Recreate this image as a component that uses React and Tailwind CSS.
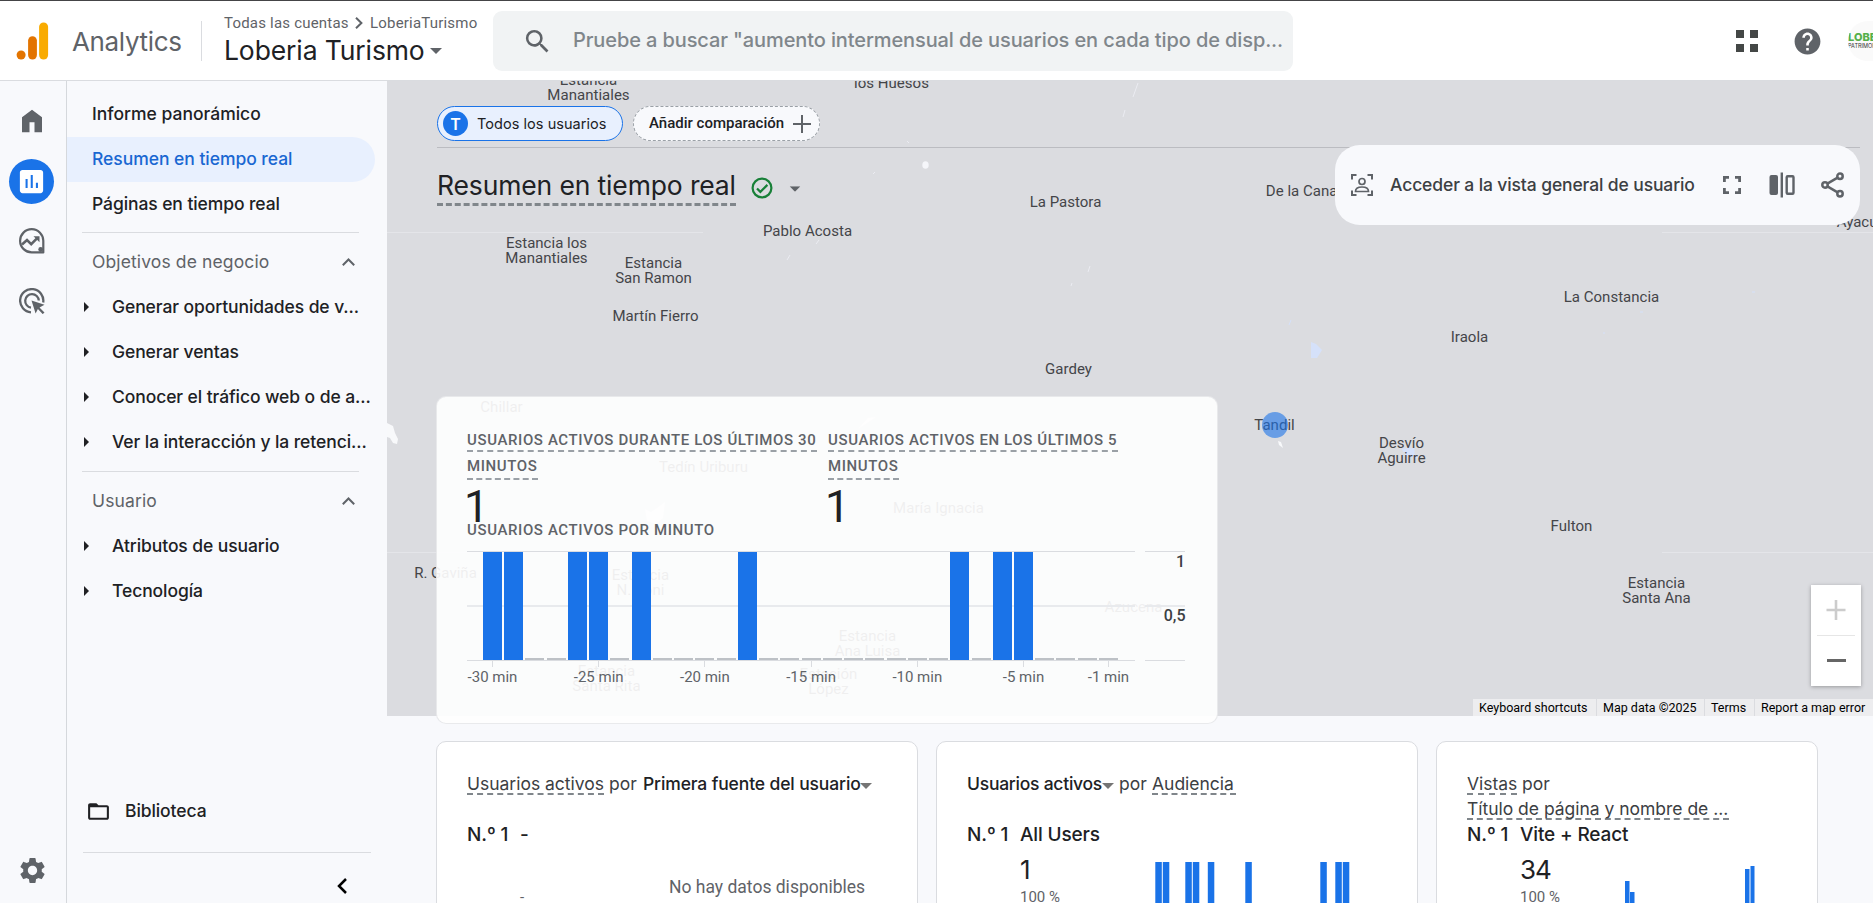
import React from "react";

const SANS = "font-['Inter',sans-serif]";
const ROBOTO = "font-['Roboto',sans-serif]";

function Svg({ className, children, box = "0 0 24 24" }) {
  return (
    <svg viewBox={box} className={"shrink-0 " + className} fill="currentColor">
      {children}
    </svg>
  );
}

function Caret({ className }) {
  return (
    <Svg box="0 0 12 6" className={"h-[6px] w-[12px] " + className}>
      <path d="M0 0h12L6 6z" />
    </Svg>
  );
}

function Header() {
  return (
    <header className="flex h-[81px] shrink-0 items-start border-t border-b border-t-[#444446] border-b-[#dadce0] bg-white">
      <svg viewBox="0 0 32 38" className="mt-[21px] ml-[16px] h-[38px] w-[33px] shrink-0">
        <circle cx="4.6" cy="33" r="4.5" fill="#e37400" />
        <rect x="11.6" y="14.2" width="8.8" height="23.3" rx="4.4" fill="#e37400" />
        <rect x="22.6" y="0.4" width="9" height="37.1" rx="4.5" fill="#f9ab00" />
      </svg>
      <div className="mt-[21px] ml-[23px] w-[130px] text-[26px] leading-[40px] tracking-[-0.35px] text-[#5f6368]">Analytics</div>
      <div className="mt-[20px] h-[40px] w-px shrink-0 bg-[#dadce0]" />
      <div className="ml-[22px] w-[269px] shrink-0">
        <div className={"mt-[11px] flex h-[22px] items-center text-[15px] tracking-[0.2px] whitespace-nowrap text-[#5f6368] " + ROBOTO}>
          <span className="w-[124px]">Todas las cuentas</span>
          <svg viewBox="0 0 8 12" className="mx-[7px] h-[12px] w-[8px]" fill="none" stroke="#5f6368" strokeWidth="2">
            <path d="M1 0.8l5.4 5.2L1 11.2" />
          </svg>
          <span>LoberiaTurismo</span>
        </div>
        <div className="flex h-[34px] items-center text-[26.5px] tracking-[-0.12px] whitespace-nowrap text-[#202124]">
          <span className="w-[200px]">Loberia Turismo</span>
          <Caret className="ml-[6px] text-[#5f6368]" />
        </div>
      </div>
      <div className="mt-[10px] flex h-[60px] w-[800px] shrink-0 items-center rounded-[9px] bg-[#f1f3f4]">
        <Svg className="ml-[29px] h-[31px] w-[31px] text-[#5f6368]">
          <path d="M15.5 14h-.79l-.28-.27A6.471 6.471 0 0 0 16 9.5 6.5 6.5 0 1 0 9.5 16c1.61 0 3.09-.59 4.23-1.57l.27.28v.79l5 4.99L20.49 19l-4.99-5zm-6 0C7.01 14 5 11.99 5 9.5S7.01 5 9.5 5 14 7.01 14 9.5 11.99 14 9.5 14z" />
        </Svg>
        <span className="mb-[3px] ml-[20px] text-[20px] font-medium tracking-[-0.11px] whitespace-nowrap text-[#80868b]">
          Pruebe a buscar "aumento intermensual de usuarios en cada tipo de disp...
        </span>
      </div>
      <div className="ml-[443px] mt-[29px] grid shrink-0 grid-cols-2 gap-[6px]">
        <i className="size-[8px] bg-[#444746]" />
        <i className="size-[8px] bg-[#444746]" />
        <i className="size-[8px] bg-[#444746]" />
        <i className="size-[8px] bg-[#444746]" />
      </div>
      <Svg className="mt-[25px] ml-[34px] size-[31px] text-[#5f6368]">
        <path d="M12 2C6.48 2 2 6.48 2 12s4.48 10 10 10 10-4.48 10-10S17.52 2 12 2zm1 17h-2v-2h2v2zm2.07-7.75l-.9.92C13.45 12.9 13 13.5 13 15h-2v-.5c0-1.1.45-2.1 1.17-2.83l1.24-1.26c.37-.36.59-.86.59-1.41 0-1.1-.9-2-2-2s-2 .9-2 2H8c0-2.21 1.79-4 4-4s4 1.79 4 4c0 .88-.36 1.68-.93 2.25z" />
      </Svg>
      <div className="ml-[25px] mt-[20px] flex h-[40px] w-[25px] shrink-0 flex-col justify-center overflow-hidden rounded-l-[20px] bg-[#fafafa]">
        <span className="text-[11px] leading-[11px] font-extrabold tracking-[0px] text-[#55b04a]">LOBERIA</span>
        <span className="text-[5.5px] leading-[7px] tracking-[0px] text-[#333]">PATRIMONIO</span>
      </div>
    </header>
  );
}

function Rail() {
  return (
    <div className="flex w-[67px] shrink-0 flex-col items-start border-r border-[#d5d8dc] text-[#5f6368]">
      <Svg className="mt-[25px] ml-[17px] size-[30px]">
        <path d="M4 21V9l8-6 8 6v12h-6v-8h-4v8z" />
      </Svg>
      <div className="mt-[23px] ml-[9px] flex size-[45px] items-center justify-center rounded-full bg-[#1a73e8] text-white">
        <Svg className="size-[31px]">
          <path d="M19 3H5c-1.1 0-2 .9-2 2v14c0 1.100.9 2 2 2h14c1.100 0 2-.9 2-2V5c0-1.100-.9-2-2-2zM9 17H7.400v-7H9v7zm4 0h-1.600V7H13v10zm4 0h-1.600v-4H17v4z" />
        </Svg>
      </div>
      <svg viewBox="0 0 26 26" className="mt-[24px] ml-[19px] size-[26px]" fill="none" stroke="currentColor" strokeWidth="2.2">
        <path d="M24.300 13A11.600 11.600 0 1 0 13 24.400h11.300z" strokeLinejoin="round" />
        <path d="M3 16.500l5-4.400 4.200 4 6.300-6.200" strokeWidth="2.600" />
        <path d="M14.500 8.300h6v6z" fill="currentColor" stroke="none" />
        <circle cx="21.700" cy="21.500" r="2.400" fill="currentColor" stroke="none" />
      </svg>
      <svg viewBox="0 0 26 26" className="mt-[34px] ml-[19px] size-[26px]" fill="none" stroke="currentColor" strokeWidth="2.300">
        <path d="M24.200 14.500A11.600 11.600 0 1 0 12 24.300" />
        <path d="M19.800 12.500A6.800 6.800 0 1 0 12 19.600" />
        <path d="M12.500 12.500l13 4.300-5 2.600 5 5-1.800 1.700-4.800-5-2.300 4.500z" fill="currentColor" stroke="none" />
      </svg>
      <Svg className="mt-auto mb-[17px] ml-[17px] size-[31px]">
        <path d="M19.140 12.940c.04-.3.06-.61.06-.94 0-.32-.02-.64-.07-.94l2.030-1.580a.49.49 0 0 0 .12-.61l-1.920-3.320a.488.488 0 0 0-.59-.22l-2.390.96c-.5-.38-1.030-.7-1.620-.94l-.36-2.540a.484.484 0 0 0-.48-.41h-3.840c-.24 0-.43.17-.47.41l-.36 2.540c-.59.24-1.130.57-1.620.94l-2.390-.96c-.22-.08-.47 0-.59.22L2.740 8.870c-.12.21-.08.47.12.61l2.030 1.580c-.05.3-.09.63-.09.94s.02.64.07.94l-2.030 1.580a.49.49 0 0 0-.12.61l1.920 3.320c.12.22.37.29.59.22l2.390-.96c.5.38 1.030.7 1.620.94l.36 2.540c.05.24.24.41.48.41h3.840c.24 0 .44-.17.47-.41l.36-2.540c.59-.24 1.130-.56 1.620-.94l2.390.96c.22.08.47 0 .59-.22l1.920-3.320c.12-.22.07-.47-.12-.61l-2.010-1.580zM12 15.600c-1.980 0-3.600-1.620-3.600-3.600s1.620-3.600 3.600-3.600 3.600 1.620 3.600 3.600-1.620 3.600-3.600 3.600z" />
      </Svg>
    </div>
  );
}

function NavItem({ children }) {
  return (
    <div className="flex h-[45px] items-center pl-[17px]">
      <svg viewBox="0 0 5 10" className="mb-[2px] h-[10px] w-[5px]" fill="#202124">
        <path d="M0 0l5 5-5 5z" />
      </svg>
      <span className="ml-[23px] whitespace-nowrap">{children}</span>
    </div>
  );
}

function NavGroup({ title, children }) {
  return (
    <div className="mt-[5px]">
      <div className="ml-[15px] mr-[28px] h-px bg-[#dadce0]" />
      <div className="mt-[7px] flex h-[45px] items-center justify-between pr-[32px] pl-[25px] font-normal tracking-[0.12px] text-[#5f6368]">
        <span>{title}</span>
        <svg viewBox="0 0 13 8" className="mb-[2px] h-[8px] w-[13px]" fill="none" stroke="#5f6368" strokeWidth="2">
          <path d="M.8 7.200L6.500 1.500l5.700 5.700" />
        </svg>
      </div>
      {children}
    </div>
  );
}

function Nav() {
  return (
    <nav className="flex w-[320px] shrink-0 flex-col pt-[11px] text-[17.5px] font-medium tracking-[-0.09px] text-[#202124]">
      <div className="flex h-[45px] items-center pl-[25px] tracking-normal">Informe panorámico</div>
      <div className="mr-[12px] flex h-[45px] items-center rounded-r-full bg-[#e8f0fe] pl-[25px] tracking-[-0.04px] text-[#1967d2]">Resumen en tiempo real</div>
      <div className="flex h-[45px] items-center pl-[25px]">Páginas en tiempo real</div>
      <NavGroup title="Objetivos de negocio">
        <NavItem>Generar oportunidades de v...</NavItem>
        <NavItem>Generar ventas</NavItem>
        <NavItem>Conocer el tráfico web o de a...</NavItem>
        <NavItem>Ver la interacción y la retenci...</NavItem>
      </NavGroup>
      <div className="h-px" />
      <NavGroup title="Usuario">
        <NavItem>Atributos de usuario</NavItem>
        <NavItem>Tecnología</NavItem>
      </NavGroup>
      <div className="mt-auto flex h-[45px] items-center pl-[19px]">
        <Svg className="size-[25px]">
          <path d="M20 6h-8l-2-2H4c-1.100 0-1.990.9-1.990 2L2 18c0 1.100.9 2 2 2h16c1.100 0 2-.9 2-2V8c0-1.100-.9-2-2-2zm0 12H4V8h16v10z" />
        </Svg>
        <span className="ml-[14px]">Biblioteca</span>
      </div>
      <div className="mt-[18px] mr-[16px] ml-[16px] h-px shrink-0 bg-[#dadce0]" />
      <svg viewBox="0 0 10 16" className="mt-[25px] mb-[9px] ml-[270px] h-[16px] w-[10px] shrink-0" fill="none" stroke="#000" strokeWidth="2.500">
        <path d="M9 1L2 8l7 7" />
      </svg>
    </nav>
  );
}

const places = [
  [588, 87, "Estancia\nManantiales"],
  [891, 82, "los Huesos"],
  [1065, 201, "La Pastora"],
  [807, 230, "Pablo Acosta"],
  [546, 250, "Estancia los\nManantiales"],
  [653, 270, "Estancia\nSan Ramon"],
  [655, 315, "Martín Fierro"],
  [1068, 368, "Gardey"],
  [1303, 190, "De la Canal"],
  [1469, 336, "Iraola"],
  [1611, 296, "La Constancia"],
  [1869, 221, "Ayacucho"],
  [1274, 424, "Tandil"],
  [1401, 450, "Desvío\nAguirre"],
  [1571, 525, "Fulton"],
  [1656, 590, "Estancia\nSanta Ana"],
  [501, 406, "Chillar"],
  [703, 466, "Tedín Uriburu"],
  [938, 507, "María Ignacia"],
  [445, 572, "R. Gaviña"],
  [640, 582, "Estancia\nN. Zoni"],
  [1133, 606, "Azucena"],
  [867, 643, "Estancia\nAna Luisa"],
  [606, 678, "Estancia\nSanta Rita"],
  [828, 681, "Estación\nLópez"],
];

function MapLayer() {
  return (
    <div className={"absolute inset-x-0 top-0 h-[635px] overflow-hidden bg-[#dbdce0] " + ROBOTO}>
      <svg viewBox="387 81 1486 635" className="absolute inset-0 h-full w-full">
        <path d="M387 232.500h316M1662 232.500h211M387 552.500h316M1662 552.500h211" stroke="#e4e5e9" />
        <path d="M387 423l6 3 2 7 3 6-1 5-4-1-3-5-3-1z" fill="#f8f9fb" />
        <path d="M1311 342l5 2 6 6-5 8h-6z" fill="#d5e1fa" />
        <ellipse cx="925.500" cy="165" rx="3.200" ry="3.800" fill="#f5f6fa" />
        <path d="M1138 83l-5 14M1125 110l-2 7M816 244l3-4M787 260l3-5M1072 283l-1 3M1088 272l2-6M873 174l2-2M907 141l2 2" stroke="#ebecf2" />
        <path d="M1402 449l12-1v6l4 4-12-3zM1289 325l2-5M1752 292h3M1603 333h2M1640 312h3" fill="#d5e1fa" stroke="#d5e1fa" />
        <path d="M1278 441l3 1 2 6-4-3z" fill="#f8f9fb" />
        <path d="M645 509l6 3 6-4 8-6-2 16-7 6-9-3zM858 429l10-11 8-1" fill="#f8f9fb" />
      </svg>
      {places.map(([x, y, name]) => (
        <div
          key={x + name}
          className="absolute -translate-x-1/2 -translate-y-1/2 text-center text-[15px] leading-[15px] tracking-[0.02px] whitespace-pre text-[#444549]"
          style={{ left: x - 386.5, top: y - 80 }}
        >
          {name}
        </div>
      ))}
      <div className="absolute top-[331px] left-[875px] size-[26px] rounded-full bg-[#1a73e8]/60" />
      <div className="absolute top-[504px] left-[1424px] flex h-[101px] w-[50px] flex-col items-center bg-white shadow-[0_1px_4px_rgba(0,0,0,0.3)]">
        <svg viewBox="0 0 20 20" className="mt-[15px] size-[20px] text-[#ccc]" stroke="currentColor" strokeWidth="2.600">
          <path d="M.5 10h19M10 0v20" />
        </svg>
        <div className="mt-[15px] h-px w-[38px] bg-[#e6e6e6]" />
        <div className="mt-[23px] h-[3px] w-[19px] bg-[#666]" />
      </div>
      <div className="absolute right-0 bottom-0 flex h-[17px] gap-px text-[12.5px] leading-[17px] whitespace-nowrap text-black">
        <span className="w-[123px] bg-[#ededef] pl-[6px]">Keyboard shortcuts</span>
        <span className="w-[107px] bg-[#ededef] pl-[6px]">Map data ©2025</span>
        <span className="w-[49px] bg-[#ededef] pl-[6px]">Terms</span>
        <span className="w-[118px] bg-[#ededef] pl-[6px]">Report a map error</span>
      </div>
    </div>
  );
}

const minuteUsers = [1, 1, 0, 0, 1, 1, 0, 1, 0, 0, 0, 0, 1, 0, 0, 0, 0, 0, 0, 0, 0, 0, 1, 0, 1, 1, 0, 0, 0, 0];
const ticks = [
  [0, "-30 min"],
  [5, "-25 min"],
  [10, "-20 min"],
  [15, "-15 min"],
  [20, "-10 min"],
  [25, "-5 min"],
  [29, "-1 min"],
];

function MinuteChart() {
  return (
    <svg viewBox="0 0 720 140" className={"mt-[10px] h-[140px] w-[720px] font-normal tracking-normal " + ROBOTO} shapeRendering="crispEdges">
      <path d="M0 1.500h668M678 1.500h40M0 110.500h668M678 110.500h40" stroke="#dadce0" />
      <path d="M0 56h668M678 56h40" stroke="#e8eaed" strokeWidth="2" />
      {minuteUsers.map((n, i) => (
        <rect
          key={i}
          x={16 + Math.round(21.240 * i)}
          y={n ? 2 : 108}
          width="19"
          height={n ? 108 : 2}
          fill={n ? "#1a73e8" : "#bdc1c6"}
        />
      ))}
      {ticks.map(([i, label]) => (
        <g key={label}>
          <rect x={25 + Math.round(21.240 * i)} y="111" width="1" height="6" fill="#dadce0" />
          <text x={25.500 + 21.240 * i} y="132" textAnchor="middle" fontSize="15" fill="#5f6368">
            {label}
          </text>
        </g>
      ))}
      <g textAnchor="end" fontSize="16" fontWeight="500" fill="#3c4043">
        <text x="718" y="17">1</text>
        <text x="718.500" y="71">0,5</text>
      </g>
    </svg>
  );
}

function Metric({ first, second, value, width }) {
  return (
    <div>
      <div className="h-[26px] leading-[26px] whitespace-nowrap">
        <span className={"inline-block h-[25px] border-b-2 border-dashed border-[#9aa0a6] " + width}>{first}</span>
      </div>
      <div className="h-[27px] leading-[26px]">
        <span className="inline-block h-[27px] w-[71px] border-b-2 border-dashed border-[#9aa0a6]">{second}</span>
      </div>
      <div className="-ml-[3px] mt-[2px] h-[38px] text-[44px] leading-[50px] font-normal tracking-normal text-[#202124]">{value}</div>
    </div>
  );
}

function RealtimeCard() {
  return (
    <section className={"mt-[190px] h-[328px] w-[782px] rounded-[10px] border border-[#dadce0]/60 bg-[#fefefe]/92 pl-[30px] text-[15px] font-medium tracking-[0.62px] text-[#5f6368] " + ROBOTO}>
      <div className="mt-[30px] flex">
        <div className="w-[361px]">
          <Metric first="USUARIOS ACTIVOS DURANTE LOS ÚLTIMOS 30" second="MINUTOS" value="1" width="w-[350px]" />
        </div>
        <Metric first="USUARIOS ACTIVOS EN LOS ÚLTIMOS 5" second="MINUTOS" value="1" width="w-[290px]" />
      </div>
      <div className="h-[20px] leading-[20px]">USUARIOS ACTIVOS POR MINUTO</div>
      <MinuteChart />
    </section>
  );
}

function Dashed({ children, className }) {
  return <span className={"inline-block h-[24px] border-b-2 border-dashed border-[#80868b] whitespace-nowrap " + className}>{children}</span>;
}

function DetailCard({ className, heading, leader, children }) {
  return (
    <section className={"h-[240px] shrink-0 rounded-t-[10px] border border-[#dadce0] bg-white pl-[30px] " + className}>
      <div className="mt-[29px] h-[50px] text-[17.5px] leading-[25px] tracking-[-0.02px] text-[#3c4043]">{heading}</div>
      <div className="flex h-[28px] items-center text-[19px] font-medium whitespace-nowrap text-[#202124]">
        <span className="w-[53px] tracking-[-0.1px]">N.º 1</span>
        <span className="tracking-[-0.15px]">{leader}</span>
      </div>
      {children}
    </section>
  );
}

function Value({ children }) {
  return (
    <div className="ml-[53px] w-[105px]">
      <div className="mt-[5px] text-[26px] leading-[32px] tracking-[-1px] text-[#202124]">{children}</div>
      <div className={"mt-px text-[15px] leading-[20px] text-[#5f6368] " + ROBOTO}>100 %</div>
    </div>
  );
}

function DetailCards() {
  return (
    <div className="mt-[17px] flex gap-[18px]">
      <DetailCard
        className="w-[482px]"
        heading={
          <div className="flex whitespace-nowrap">
            <Dashed className="w-[137px]">Usuarios activos</Dashed>
            <span className="ml-[5px] w-[34px]">por</span>
            <span className="w-[217px] font-medium tracking-[-0.13px] text-[#202124]">Primera fuente del usuario</span>
            <Caret className="mt-[12px] text-[#757575]" />
          </div>
        }
        leader="-"
      >
        <div className={"flex text-[#5f6368] " + ROBOTO}>
          <span className="mt-[37px] ml-[53px] w-[149px] text-[15px]">-</span>
          <span className="mt-[25px] text-[17.5px] tracking-[0px]">No hay datos disponibles</span>
        </div>
      </DetailCard>
      <DetailCard
        className="w-[482px]"
        heading={
          <div className="flex whitespace-nowrap">
            <span className="w-[135px] font-medium tracking-[-0.25px] text-[#202124]">Usuarios activos</span>
            <Caret className="mt-[12px] text-[#757575]" />
            <span className="ml-[5px] w-[33px]">por</span>
            <Dashed className="w-[84px]">Audiencia</Dashed>
          </div>
        }
        leader="All Users"
      >
        <div className="flex">
          <Value>1</Value>
          <svg viewBox="0 0 230 60" className="mt-[12px] ml-[30px] h-[60px] w-[230px]" fill="#1a73e8">
            {minuteUsers.map((n, i) => (n ? <rect key={i} x={0.300 + 7.500 * i} y="1" width="6.500" height="60" /> : null))}
          </svg>
        </div>
      </DetailCard>
      <DetailCard
        className="w-[382px]"
        heading={
          <>
            <div className="flex h-[25px] whitespace-nowrap">
              <Dashed className="w-[50px]">Vistas</Dashed>
              <span className="ml-[5px]">por</span>
            </div>
            <Dashed className="w-[262px]">Título de página y nombre de ...</Dashed>
          </>
        }
        leader="Vite + React"
      >
        <div className="flex">
          <Value>34</Value>
          <svg viewBox="0 0 150 60" className="mt-[13px] h-[60px] w-[150px]" fill="#1a73e8">
            <path d="M0 19h4.500v41H0zM5 30h4.500v30H5zM120 7h4.500v53H120zM125.500 4h4v56h-4z" />
          </svg>
        </div>
      </DetailCard>
    </div>
  );
}

function Toolbar() {
  return (
    <div className="absolute top-[64px] right-[13px] flex h-[80px] w-[525px] items-center rounded-[25px] bg-[#f8f9fc] text-[#5f6368]">
      <svg viewBox="0 0 24 24" className="ml-[15px] size-[24px]" fill="none" stroke="currentColor" strokeWidth="2">
        <path d="M2 6.500V2h4.500M17.500 2H22v4.500M22 17.500V22h-4.500M6.500 22H2v-4.500" />
        <circle cx="12" cy="8.500" r="3" strokeWidth="1.700" />
        <path d="M5.500 18.500c0-3 3-4.500 6.500-4.500s6.500 1.500 6.500 4.500z" strokeWidth="1.700" />
      </svg>
      <span className="ml-[16px] w-[305px] pt-px text-[17.5px] font-medium tracking-[-0.12px] whitespace-nowrap text-[#3c4043]">
        Acceder a la vista general de usuario
      </span>
      <svg viewBox="0 0 18 18" className="ml-[28px] size-[18px]" fill="none" stroke="currentColor" strokeWidth="2.800">
        <path d="M1.400 6V1.400H6M12 1.400h4.600V6M16.600 12v4.600H12M6 16.600H1.400V12" />
      </svg>
      <svg viewBox="0 0 26 26" className="ml-[28px] size-[26px]" fill="none" stroke="currentColor" strokeWidth="2.400">
        <rect x="0.500" y="3" width="8.500" height="20" rx="2" fill="currentColor" stroke="none" />
        <path d="M12.800.5v25" />
        <rect x="17.700" y="4.200" width="6.800" height="17.600" rx="1" />
      </svg>
      <svg viewBox="0 0 24 26" className="ml-[26px] h-[26px] w-[24px]" fill="none" stroke="currentColor" strokeWidth="2.500">
        <circle cx="4" cy="13" r="2.700" />
        <circle cx="19" cy="4.300" r="2.700" />
        <circle cx="19" cy="21.700" r="2.700" />
        <path d="M6.400 11.600l10.200-5.900M6.400 14.400l10.200 5.900" />
      </svg>
    </div>
  );
}

function Main() {
  return (
    <main className="relative min-w-0 flex-1 overflow-hidden">
      <MapLayer />
      <div className="relative pl-[49px]">
        <div className="ml-px mr-[13px] flex h-[67px] gap-[10px] border-b border-[#bbbcc1] pt-[25px]">
          <div className="flex h-[35px] w-[186px] items-center rounded-full border border-[#1a73e8] bg-[#e8f0fe] pl-[5px]">
            <div className="flex size-[25px] items-center justify-center rounded-full bg-[#1a73e8] text-[16px] font-semibold text-white">T</div>
            <span className="ml-[9px] text-[14.500px] tracking-[0.05px] whitespace-nowrap text-[#202124]">Todos los usuarios</span>
          </div>
          <div className="flex h-[35px] w-[187px] items-center rounded-full border border-dashed border-[#9aa0a6] bg-[#f8f9fc] pl-[15px]">
            <span className={"w-[144px] text-[15px] font-medium whitespace-nowrap text-[#202124] " + ROBOTO}>Añadir comparación</span>
            <svg viewBox="0 0 18 18" className="size-[18px]" stroke="#5f6368" strokeWidth="2">
              <path d="M0 9h18M9 0v18" />
            </svg>
          </div>
        </div>
        <div className="mt-[22px] ml-px flex h-[36px]">
          <div className="h-[36px] w-[299px] border-b-3 border-dashed border-[#80868b] text-[26.500px] leading-[30px] tracking-[-0.14px] whitespace-nowrap text-[#202124]">
            Resumen en tiempo real
          </div>
          <svg viewBox="0 0 22 22" className="mt-[7px] ml-[15px] size-[22px]" fill="none" stroke="#188038" strokeWidth="2.200">
            <circle cx="11" cy="11" r="9.400" />
            <path d="M6 11.500l3.400 3.400 7-7" />
          </svg>
          <Caret className="mt-[16px] ml-[16px] scale-90 text-[#5f6368]" />
        </div>
        <RealtimeCard />
        <DetailCards />
      </div>
      <Toolbar />
    </main>
  );
}

export default function App() {
  return (
    <div className={"flex h-[903px] w-[1873px] flex-col overflow-hidden bg-[#f8f9fc] " + SANS}>
      <Header />
      <div className="flex min-h-0 flex-1">
        <Rail />
        <Nav />
        <Main />
      </div>
    </div>
  );
}
